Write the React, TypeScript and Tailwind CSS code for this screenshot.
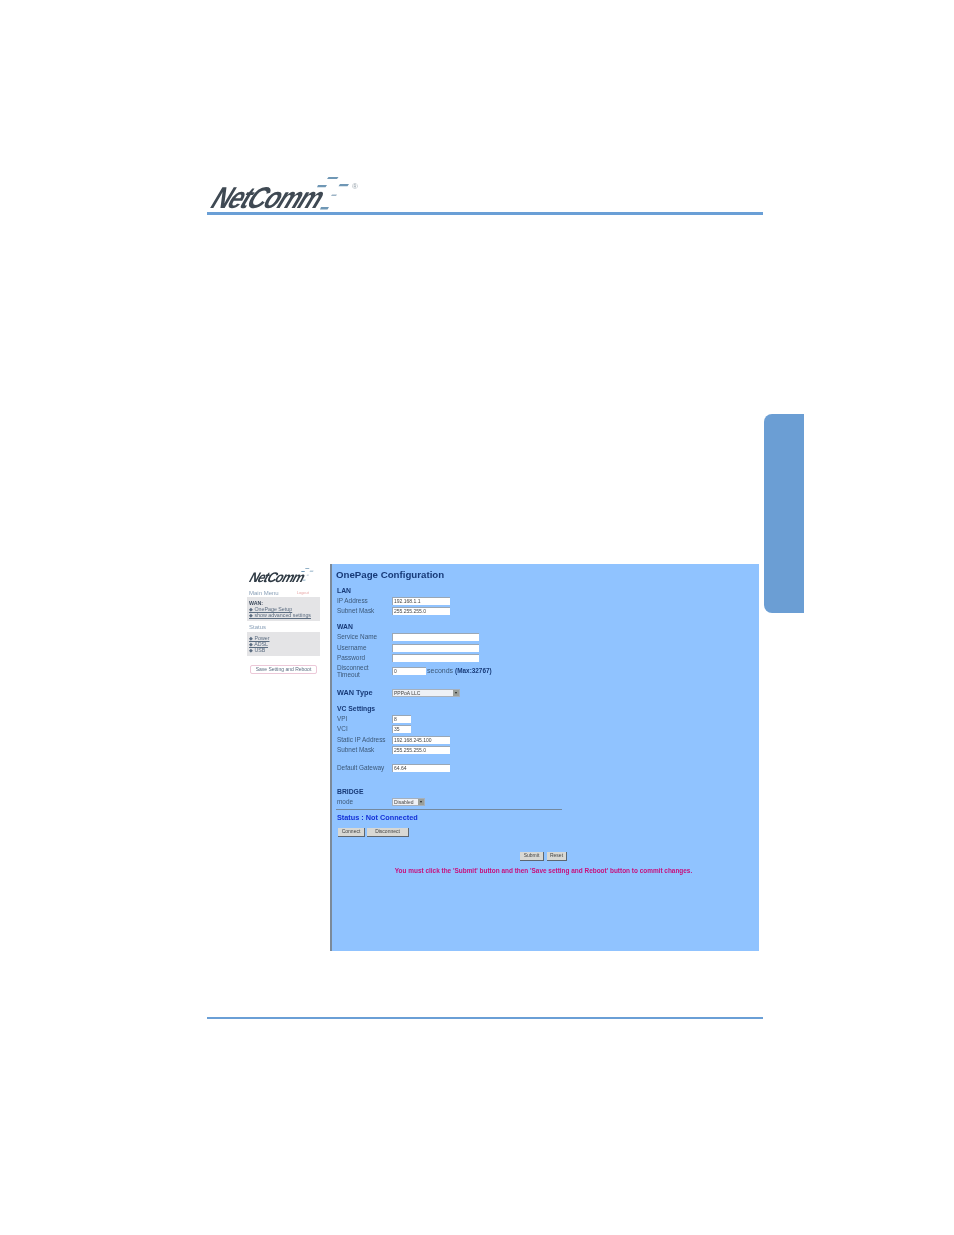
const font = "font-['Liberation_Sans',Arial,sans-serif]";

function Dashes({ className }: { className: string }) {
  return (
    <svg className={className} viewBox="0 0 43 36" fill="#6f97b5">
      <path d="M11.5 0h10l-1.5 2h-10z" />
      <path d="M1 8h9l-1.5 2.2H0z" />
      <path d="M23 7h9l-1.5 2.2h-9z" />
      <path d="M15 17.5h5l-1 1.5h-5z" fill="#9db4c6" />
      <path d="M4 30h8l-1.5 2.4H3z" />
    </svg>
  );
}

function Field({ label, width, value, className = "h-[10px]" }: { label: string; width: string; value?: string; className?: string }) {
  return (
    <div className={`flex items-center ${className}`}>
      <span className="w-[56px] pl-px pb-[2px] text-[6.4px] leading-[7px] text-[#3c5878]">{label}</span>
      <span className={`h-[8px] bg-white border-t border-l border-[#9aa7b5] pl-px text-[5px] leading-[7px] text-[#444] ${width}`}>{value}</span>
    </div>
  );
}

function Select({ label, width, value, bold }: { label: string; width: string; value: string; bold?: boolean }) {
  return (
    <div className="flex items-center h-[10px]">
      <span className={`w-[56px] pl-px pb-px leading-[7px] ${bold ? "text-[7.3px] font-bold text-[#173a78]" : "text-[6.4px] text-[#3c5878]"}`}>{label}</span>
      <span className={`flex justify-between h-[8px] bg-[#eef1f6] border border-[#a6b0bc] pl-px text-[5px] leading-[6px] text-[#444] ${width}`}>
        {value}
        <span className="w-[6px] bg-[#9a9f9a] text-center text-[4px] text-[#222]">▾</span>
      </span>
    </div>
  );
}

function Btn({ label, width }: { label: string; width: string }) {
  return (
    <span className={`flex items-center justify-center h-[9px] bg-[#d8d8d4] border-r border-b border-[#5d6670] text-[5px] text-[#444] ${width}`}>
      {label}
    </span>
  );
}

function Heading({ children, className = "" }: { children: string; className?: string }) {
  return <div className={`h-[10px] pl-px text-[6.8px] leading-[10px] font-bold text-[#173a78] ${className}`}>{children}</div>;
}

function Sidebar() {
  return (
    <aside className="w-[86px] shrink-0 bg-white pt-[6px] pl-[3px] pr-[10px]">
      <div className="relative h-[16px]">
        <span className="block w-max origin-bottom-left -skew-x-[30deg] scale-x-[0.9] text-[14px] leading-[14px] font-bold tracking-[-1px] text-[#2f3a44]">NetComm</span>
        <Dashes className="absolute left-[54px] -top-[2px] w-[17px] h-[14px]" />
      </div>
      <div className="flex gap-[18px] mt-[3px] h-[8px] pl-[2px] text-[6px] leading-[8px] text-[#8aa0b8]">
        Main Menu
        <span className="text-[4px] text-[#e8a8a8]">Logout</span>
      </div>
      <div className="h-[24px] bg-[#e4e4e6] pl-[2px] pt-[3px] text-[5.3px] leading-[6px] text-[#5b6c80]">
        <div className="font-bold text-[#3c4a5c]">WAN:</div>
        <div className="underline whitespace-nowrap">◆ OnePage Setup</div>
        <div className="underline whitespace-nowrap">◆ show advanced settings</div>
      </div>
      <div className="mt-[2px] h-[9px] pl-[2px] text-[6px] leading-[9px] text-[#8aa0b8]">Status</div>
      <div className="h-[24px] bg-[#e4e4e6] pl-[2px] pt-[3px] text-[5.3px] leading-[6px] text-[#5b6c80]">
        <div className="underline">◆ Power</div>
        <div className="underline">◆ ADSL</div>
        <div>◆ USB</div>
      </div>
      <div className="flex items-center justify-center ml-[3px] mt-[9px] h-[9px] w-[67px] rounded-[2px] border border-[#ecc8d8] text-[5px] text-[#5b6c80] whitespace-nowrap">
        Save Setting and Reboot
      </div>
    </aside>
  );
}

function Config() {
  return (
    <section className="flex-1 border-l-2 border-[#7c8a99] bg-[#90c3ff] pl-[4px] pt-[6px]">
      <h1 className="h-[10px] text-[9.7px] leading-[10px] font-bold text-[#173a78]">OnePage Configuration</h1>
      <Heading className="mt-[6px]">LAN</Heading>
      <Field label="IP Address" width="w-[58px]" value="192.168.1.1" />
      <Field label="Subnet Mask" width="w-[58px]" value="255.255.255.0" />
      <Heading className="mt-[6px]">WAN</Heading>
      <Field label="Service Name" width="w-[87px]" />
      <Field label="Username" width="w-[87px]" className="h-[10px] mt-px" />
      <Field label="Password" width="w-[87px]" />
      <div className="flex items-center h-[14px] mt-px">
        <span className="w-[56px] pl-px pb-px text-[6.4px] leading-[7px] text-[#3c5878]">Disconnect<br />Timeout</span>
        <span className="h-[8px] w-[34px] bg-white border-t border-l border-[#9aa7b5] pl-px text-[5px] leading-[7px] text-[#444]">0</span>
        <span className="ml-px text-[7px] text-[#3c5878]">seconds</span>
        <span className="ml-[2px] text-[6.4px] font-bold text-[#173a78]">(Max:32767)</span>
      </div>
      <div className="mt-[10px]">
        <Select label="WAN Type" width="w-[68px]" value="PPPoA LLC" bold />
      </div>
      <Heading className="mt-[6px]">VC Settings</Heading>
      <Field label="VPI" width="w-[19px]" value="8" />
      <Field label="VCI" width="w-[19px]" value="35" />
      <Field label="Static IP Address" width="w-[58px]" className="h-[10px] mt-px" value="192.168.245.100" />
      <Field label="Subnet Mask" width="w-[58px]" value="255.255.255.0" />
      <Field label="Default Gateway" width="w-[58px]" className="h-[10px] mt-[8px]" value="64.64" />
      <Heading className="mt-[14px]">BRIDGE</Heading>
      <Select label="mode" width="w-[33px]" value="Disabled" />
      <div className="mt-[2px] h-px w-[226px] bg-[#74899f]" />
      <div className="mt-[3px] h-[10px] pl-px text-[7.3px] leading-[10px] font-bold text-[#1230d8]">Status : Not Connected</div>
      <div className="flex gap-[2px] mt-[5px] pl-[2px]">
        <Btn label="Connect" width="w-[27px]" />
        <Btn label="Disconnect" width="w-[42px]" />
      </div>
      <div className="pr-[8px]">
        <div className="flex justify-center gap-[3px] mt-[15px]">
          <Btn label="Submit" width="w-[24px]" />
          <Btn label="Reset" width="w-[20px]" />
        </div>
        <p className="mt-[5px] h-[10px] text-center text-[6.44px] leading-[10px] font-bold text-[#c8107c] whitespace-nowrap">
          You must click the 'Submit' button and then 'Save setting and Reboot' button to commit changes.
        </p>
      </div>
    </section>
  );
}

export default function App() {
  return (
    <div className={`relative h-[1235px] w-[954px] overflow-hidden bg-white ${font}`}>
      <div className="ml-[207px] w-[556px]">
        {/* Header */}
        <header className="pt-[175px]">
          <div className="relative h-[37px] blur-[0.6px]">
            <span className="absolute left-[1px] bottom-[3px] origin-bottom-left -skew-x-[36deg] scale-x-[0.82] text-[30px] leading-[23px] font-bold tracking-[-1.6px] text-[#3f4953]">NetComm</span>
            <Dashes className="absolute left-[110px] top-[2px] w-[43px] h-[36px]" />
            <span className="absolute left-[145px] top-[7px] text-[8px] leading-[9px] text-[#9aa5ae]">®</span>
          </div>
          <div className="h-[3px] bg-[#6a9fd6]" />
        </header>

        {/* Screenshot */}
        <figure className="flex ml-[37px] mt-[349px] h-[387px] w-[515px] blur-[0.7px]">
          <Sidebar />
          <Config />
        </figure>

        {/* Footer rule */}
        <div className="mt-[66px] h-[2px] bg-[#6a9fd6]" />
      </div>

      {/* Chapter tab */}
      <div className="absolute left-[764px] top-[414px] h-[199px] w-[40px] rounded-l-[8px] bg-[#6b9ed4]" />
    </div>
  );
}
